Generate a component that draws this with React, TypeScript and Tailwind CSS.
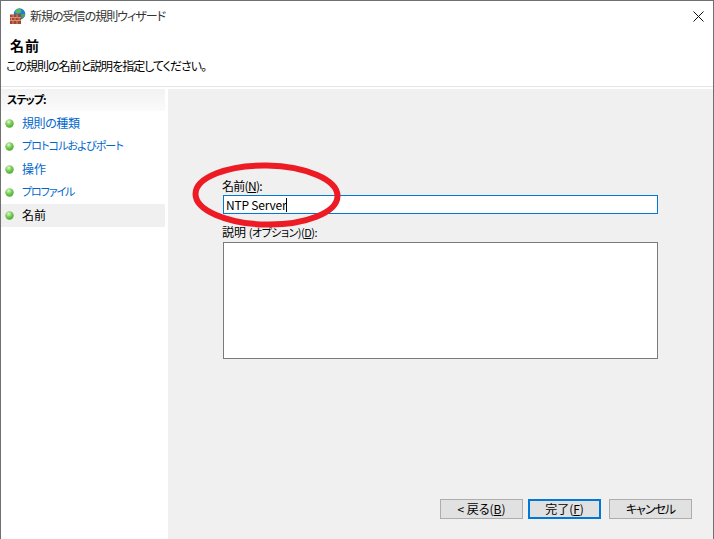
const font = { fontFamily: '"Noto Sans CJK JP", "Liberation Sans", sans-serif' };

const steps = [
  { label: "規則の種類", text: "text-[12px] tracking-[-0.4px]" },
  { label: "プロトコルおよびポート", text: "text-[11px] tracking-[-0.9px]" },
  { label: "操作", text: "text-[12px]" },
  { label: "プロファイル", text: "text-[11px] tracking-[-1.1px]" },
  { label: "名前", text: "text-[12px]" },
];

function Bullet() {
  return (
    <svg width="11" height="11" viewBox="0 0 11 11" className="shrink-0">
      <defs>
        <radialGradient id="orb" cx="0.4" cy="0.3" r="0.75">
          <stop offset="0" stopColor="#e4f5dc" />
          <stop offset="0.45" stopColor="#7fd05a" />
          <stop offset="1" stopColor="#3fa52c" />
        </radialGradient>
      </defs>
      <circle cx="5.5" cy="5.5" r="4.2" fill="url(#orb)" />
    </svg>
  );
}

function FirewallIcon() {
  return (
    <svg width="16" height="16" viewBox="0 0 16 16" className="shrink-0">
      <circle cx="9.5" cy="6" r="5.8" fill="#1f7fd0" />
      <path d="M5.500 2.500c2-2.200 4.500-2 5.500-.5s-1 3.500-2.500 3.500S4.500 5 5.500 2.500z" fill="#5cb85c" />
      <path d="M11 6.500c1.500-1 3.500-1 4.200-.3-.3 2-1.500 3.600-3.200 4.300z" fill="#4ca64c" />
      <rect x="0" y="6.500" width="11" height="9.500" fill="#a8432f" />
      <path d="M0 9.500h11M0 12.500h11M3 6.500v3M7 6.500v3M1.500 9.500v3M5 9.500v3M9 9.500v3M3 12.500v3.500M7 12.500v3.500" stroke="#dca48c" strokeWidth="0.8" fill="none" />
    </svg>
  );
}

function WizButton({ label, primary, className }: { label: React.ReactNode; primary?: boolean; className?: string }) {
  return (
    <button
      className={
        (primary
          ? "w-[73px] h-[20px] bg-[#e1e1e1] border-2 border-[#0078d7] text-[12px] leading-none text-black "
          : "w-[83px] h-[20px] bg-[#e1e1e1] border border-[#adadad] text-[12px] leading-none text-black ") + (className ?? "")
      }
    >
      {label}
    </button>
  );
}

export default function App() {
  return (
    <div style={font} className="relative w-[714px] h-[539px] overflow-hidden bg-white border border-b-0 border-[#707070] text-black flex flex-col [font-feature-settings:'palt']">
      <div className="h-[30px] flex items-center pl-[9px] shrink-0">
        <FirewallIcon />
        <span className="ml-[4px] text-[12px] tracking-[-1px] text-[#333]">新規の受信の規則ウィザード</span>
        <svg width="11" height="11" viewBox="0 0 11 11" className="ml-auto mr-[9px]">
          <path d="M0.500 0.500l10 10M10.500 0.500l-10 10" stroke="#111" strokeWidth="1" fill="none" />
        </svg>
      </div>
      <div className="h-[56px] shrink-0 border-b border-[#e5e5e5]">
        <div className="pl-[9px] pt-[4px] text-[14px] leading-[20px] font-bold tracking-[1px]">名前</div>
        <div className="pl-[5px] pt-[3px] text-[12px] leading-[16px] tracking-[-1px]">この規則の名前と説明を指定してください。</div>
      </div>
      <div className="flex flex-1 pt-[2px] min-h-0">
        <div className="w-[164px] shrink-0 flex flex-col">
          <div className="h-[22px] bg-gradient-to-b from-[#f2f2f2] to-[#fbfbfb] pl-[6px] text-[11px] tracking-[-1px] font-bold leading-[20px]">ステップ:</div>
          <ul className="flex flex-col mt-[1px]">
            {steps.map((s, i) => (
              <li
                key={s.label}
                className={
                  i === 4
                    ? "h-[23px] flex items-center pl-[3px] gap-[7px] bg-[#f0f0f0] leading-[21px] text-black"
                    : "h-[23px] flex items-center pl-[3px] gap-[7px] leading-[21px] text-[#0066cc]"
                }
              >
                <Bullet />
                <span className={"-mt-[2px] " + s.text}>{s.label}</span>
              </li>
            ))}
          </ul>
        </div>
        <div className="w-[3px] shrink-0" />
        <div className="flex-1 bg-[#f0f0f0] flex flex-col">
          <div className="px-[55px] flex flex-col">
            <label className="mt-[89px] -ml-[1px] text-[12px] leading-[16px] tracking-[-0.7px]">
              名前(<span className="underline">N</span>):
            </label>
            <div className="mt-[1px] h-[19px] bg-white border border-[#0078d7] flex items-center pl-[2px] text-[12px] tracking-[-0.2px]">
              NTP Server<span className="w-px h-[14px] bg-black" />
            </div>
            <label className="mt-[10px] -ml-[1px] text-[12px] leading-[16px]">
              説明 <span className="text-[11px] tracking-[-0.5px]">(オプション)(<span className="underline">D</span>):</span>
            </label>
            <div className="mt-[2px] h-[117px] bg-white border border-[#7a7a7a]" />
          </div>
          <div className="mt-auto pb-[20px] pr-[21px] flex justify-end">
            <WizButton label={<>&lt; 戻る(<span className="underline">B</span>)</>} />
            <div className="w-[5px]" />
            <WizButton primary label={<>完了(<span className="underline">F</span>)</>} />
            <div className="w-[8px]" />
            <WizButton label="キャンセル" className="tracking-[-1px]" />
          </div>
        </div>
      </div>
      <svg width="160" height="80" viewBox="0 0 160 80" className="absolute left-[186px] top-[153px] pointer-events-none" fill="none">
        <ellipse cx="79.500" cy="41" rx="71" ry="29.500" transform="rotate(1 79.500 41)" stroke="#ed1c24" strokeWidth="6" />
      </svg>
    </div>
  );
}
